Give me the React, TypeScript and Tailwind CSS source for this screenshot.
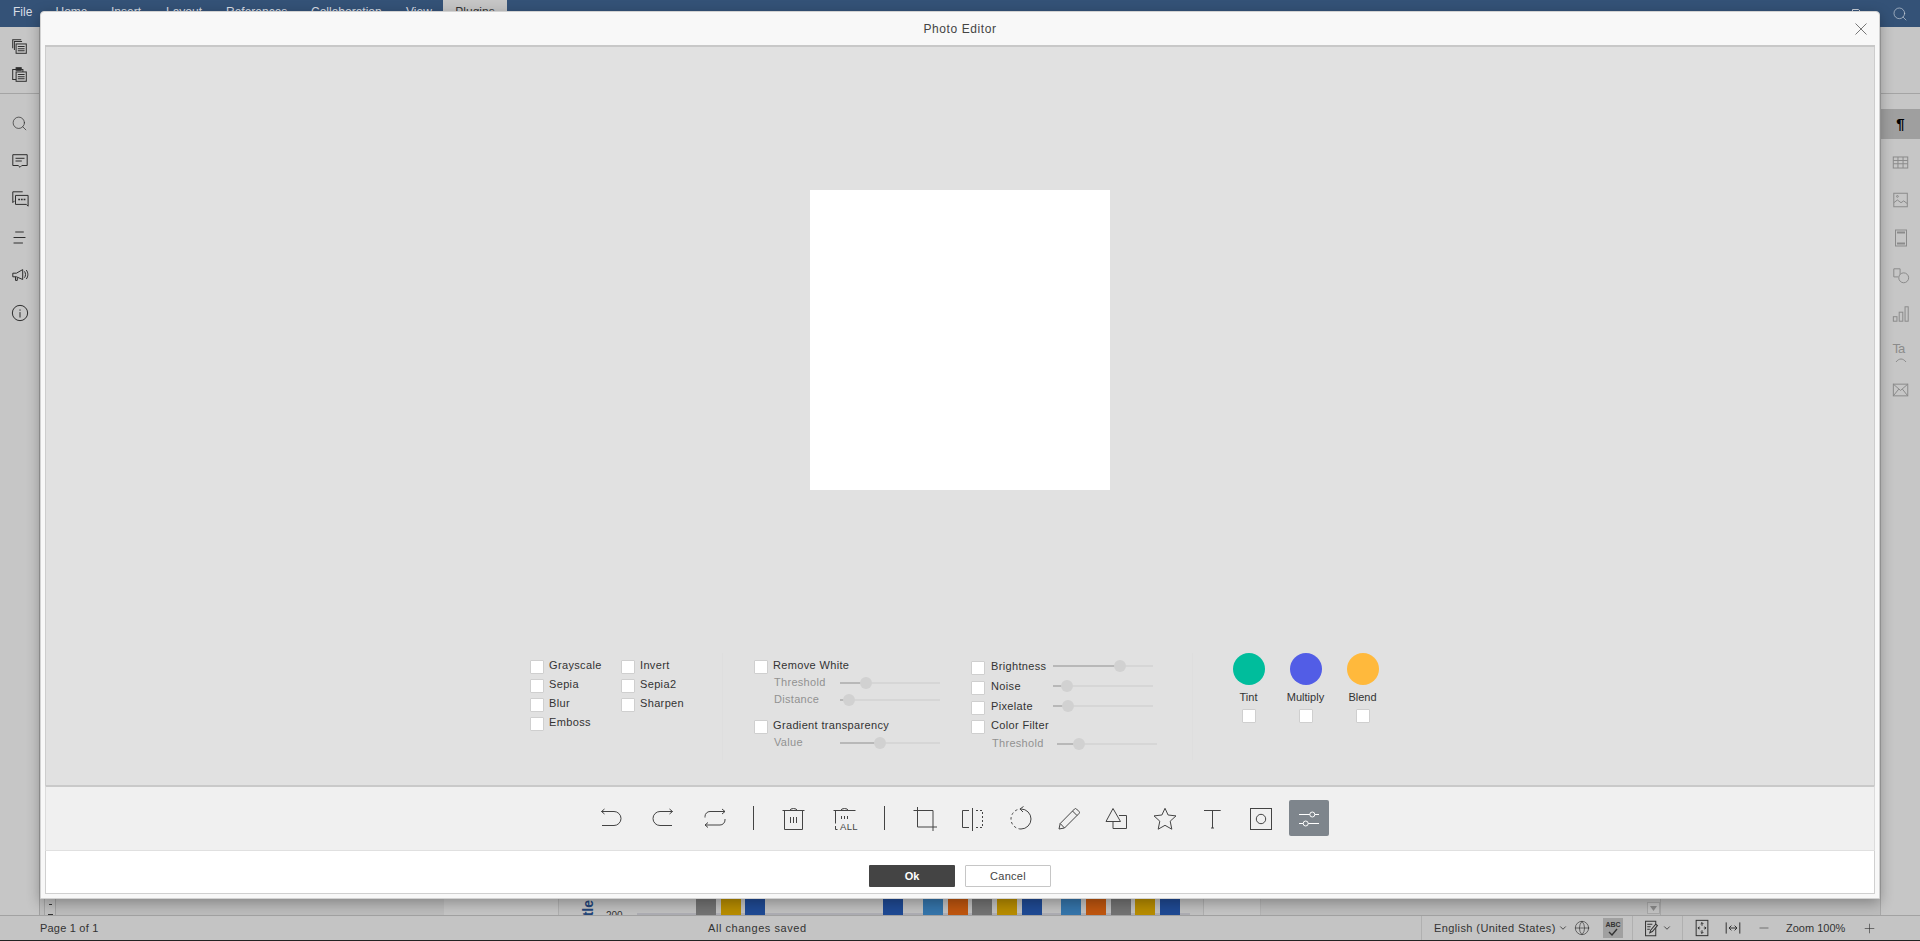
import React from 'react';
import { Search, Plus, Minus, ChevronDown, Globe } from 'lucide-react';

const menuItems = [
  { label: 'Home', w: 'w-[55.5px]' },
  { label: 'Insert', w: 'w-[55px]' },
  { label: 'Layout', w: 'w-[60px]' },
  { label: 'References', w: 'w-[85px]' },
  { label: 'Collaboration', w: 'w-[95px]' },
  { label: 'View', w: 'w-[37px]' },
];

const Ico = ({ children, size = 20, className = '' }: { children: React.ReactNode; size?: number; className?: string }) => (
  <svg width={size} height={size} viewBox="0 0 20 20" fill="none" stroke="currentColor" strokeWidth={20 / size} className={className}>
    {children}
  </svg>
);

const Check = ({ className = '' }: { className?: string }) => (
  <span className={`block w-[14px] h-[14px] bg-white border border-[#cfcfcf] rounded-[1px] shrink-0 ${className}`} />
);

const Slider = ({ pct }: { pct: number }) => (
  <span className="relative block w-[100px] h-[2px] bg-[#d6d6d6]">
    <span className="absolute left-0 top-0 h-[2px] bg-[#b8b8b8]" style={{ width: `${pct}%` }} />
    <span className="absolute top-[-5px] w-[12px] h-[12px] rounded-full bg-[#d1d1d1]" style={{ left: `calc(${pct}% - 6px)` }} />
  </span>
);

const Filter = ({ label }: { label: string }) => (
  <div className="flex items-start h-[19px] gap-[5px]">
    <Check className="mt-[2px]" />
    <span className="text-[11px] leading-[14px] tracking-[0.35px] text-[#333]">{label}</span>
  </div>
);

const Disabled = ({ label, pct, className = 'ml-[20px]' }: { label: string; pct: number; className?: string }) => (
  <div className={`flex items-center h-[17px] ${className}`}>
    <span className="w-[66px] text-[11px] tracking-[0.3px] text-[#919191]">{label}</span>
    <Slider pct={pct} />
  </div>
);

const SliderRow = ({ label, pct, h = 'h-[20px]' }: { label: string; pct: number; h?: string }) => (
  <div className={`flex items-start ${h}`}>
    <Check className="mt-[2px]" />
    <span className="w-[62px] ml-[6px] text-[11px] leading-[14px] tracking-[0.35px] text-[#333]">{label}</span>
    <span className="mt-[6px]"><Slider pct={pct} /></span>
  </div>
);

const Swatch = ({ label, color }: { label: string; color: string }) => (
  <div className="flex flex-col items-center w-[57px]">
    <span className={`block w-[32px] h-[32px] rounded-full ${color}`} />
    <span className="mt-[5px] h-[14px] text-[11px] text-[#333] leading-[14px]">{label}</span>
    <Check className="mt-[5px]" />
  </div>
);

const ToolBtn = ({ children, active }: { children: React.ReactNode; active?: boolean }) => (
  <div className={`w-[40px] h-[36px] shrink-0 flex items-center justify-center rounded-[2px] ${active ? 'bg-[#7e858c] text-white' : 'text-[#444]'}`}>
    {children}
  </div>
);

const ToolIcon = ({ children }: { children: React.ReactNode }) => (
  <svg width="26" height="26" viewBox="0 0 26 26" fill="none" stroke="currentColor" strokeWidth="1">
    {children}
  </svg>
);

const Sep = ({ className }: { className: string }) => <div className={`w-px h-[24px] bg-[#444] shrink-0 ${className}`} />;

const RailItem = ({ children }: { children: React.ReactNode }) => (
  <div className="h-[38px] flex items-center justify-center">{children}</div>
);

const chartBars = [
  { x: 696, c: 'bg-[#737373]' }, { x: 721, c: 'bg-[#b88d00]' }, { x: 745, c: 'bg-[#1f4a94]' },
  { x: 883, c: 'bg-[#1f4a94]' }, { x: 923, c: 'bg-[#3575ab]' }, { x: 948, c: 'bg-[#bf560f]' },
  { x: 972, c: 'bg-[#737373]' }, { x: 997, c: 'bg-[#b88d00]' }, { x: 1022, c: 'bg-[#1f4a94]' },
  { x: 1061, c: 'bg-[#3575ab]' }, { x: 1086, c: 'bg-[#bf560f]' }, { x: 1111, c: 'bg-[#737373]' },
  { x: 1135, c: 'bg-[#b88d00]' }, { x: 1160, c: 'bg-[#1f4a94]' },
];

export default function App() {
  return (
    <div className="relative w-[1920px] h-[941px] overflow-hidden bg-[#c4c4c4] flex flex-col font-['Liberation_Sans',Arial,sans-serif] text-[#333]">
      {/* app header behind the dialog */}
      <div className="h-[27px] bg-[#345277] flex items-center text-[12px] text-[#d9dee5] shrink-0">
        <span className="w-[42.5px] ml-[13px] relative top-[-2px]">File</span>
        {menuItems.map((m) => (
          <span key={m.label} className={`${m.w} relative top-[-2px]`}>{m.label}</span>
        ))}
        <span className="w-[64px] h-full bg-[#c6c6c6] text-[#333] flex items-center justify-center pb-[4px]">Plugins</span>
        <div className="ml-auto mr-[12px] flex items-center gap-[24px] text-[#c9d0da]">
          <svg width="16" height="14" viewBox="0 0 16 14" fill="none" stroke="currentColor"><path d="M.5 12V2.500h6l2 2h7V12z" /></svg>
          <Search size={16} strokeWidth={1} />
        </div>
      </div>

      <div className="flex-1 flex min-h-0">
        {/* left rail */}
        <div className="w-[40px] bg-[#c6c6c6] shrink-0 border-r border-[#a0a0a0] text-[#2e2e2e]">
          <div className="h-[67px] border-b border-[#a4a4a4] flex flex-col items-center pt-[11px] gap-[11px]">
            <Ico size={17}>
              <path d="M2 12V2h10M4 14V4h9" /><rect x="6" y="7" width="12" height="11" fill="#c6c6c6" /><path d="M8 10h8M8 12.500h8M8 15h8" />
            </Ico>
            <Ico size={17}>
              <path d="M6 4H2v12h4" /><rect x="6" y="2" width="6" height="3" fill="currentColor" /><path d="M12 4h2v3" /><rect x="6" y="7" width="12" height="11" /><path d="M8 10h8M8 12.500h8M8 15h8" />
            </Ico>
          </div>
          <div className="flex flex-col pt-[10px]">
            <RailItem><Search size={17} strokeWidth={1} /></RailItem>
            <RailItem>
              <Ico size={18}><path d="M2 3h16v12h-6l-2 2-2-2H2z" /><path d="M5 7h10M5 10h7" /></Ico>
            </RailItem>
            <RailItem>
              <Ico size={18}><path d="M13 2H2v12l2-2" /><path d="M5 6h14v12l-2-2H5z" /><path d="M8 10.500h2M11 10.500h2M14 10.500h2" strokeWidth="1.600" /></Ico>
            </RailItem>
            <RailItem>
              <Ico size={17}><path d="M5 3.500h10M3 10h14M3 16.500h11" /></Ico>
            </RailItem>
            <RailItem>
              <Ico size={18}><path d="M2 8h4l7-4v11L6 12H2zM5 12v4h2v-3" /><path d="M15 6c1.500 2 1.500 5 0 7M17 4.500c2.300 3 2.300 7 0 10" /></Ico>
            </RailItem>
            <RailItem>
              <Ico size={18}><circle cx="10" cy="10" r="8.500" /><path d="M10 9v6M10 6v1.500" /></Ico>
            </RailItem>
          </div>
        </div>

        {/* document area, mostly under the dialog */}
        <div className="relative flex-1 overflow-hidden bg-[#bdbdbd]">
          <div className="absolute left-[404px] w-[817px] top-0 bottom-0 bg-[#c6c6c6] border-r border-[#b4b4b4]" />
          <div className="absolute left-[518px] w-[646px] top-0 bottom-0 bg-[#c2c2c2] border-x border-[#b0b0b0]" />
          <div className="absolute left-[4px] w-[12px] bottom-0 h-[16px] bg-[#c0c0c0] border-x border-[#a4a4a4] flex flex-col items-center justify-between pt-[5px] text-[#333]">
            <span className="block w-[3px] h-px bg-[#333]" />
            <span className="block w-[5px] h-px bg-[#333]" />
          </div>
          <div className="absolute left-[1607px] w-[13px] bottom-[1px] h-[12px] bg-[#c4c4c4] border border-[#a8a8a8] flex items-center justify-center">
            <svg width="7" height="5" viewBox="0 0 7 5"><path d="M0 0h7L3.500 5z" fill="#8a8a8a" /></svg>
          </div>
          <div className="absolute left-[1620px] w-px bottom-0 h-[16px] bg-[#a8a8a8]" />
          <div className="absolute left-[597px] w-[553px] bottom-0 h-[2px] bg-[#aeaeb4]" />
          {chartBars.map((b) => (
            <div key={b.x} className={`absolute bottom-0 w-[20px] h-[16px] ${b.c}`} style={{ left: b.x - 40 }} />
          ))}
          <span className="absolute left-[566px] bottom-[-6px] text-[10px] leading-[10px] text-[#333]">200</span>
          <span className="absolute left-[541px] bottom-[-14px] text-[14px] leading-[14px] font-bold text-[#24467a] [writing-mode:vertical-rl] rotate-180">Title</span>
        </div>

        {/* right rail */}
        <div className="w-[40px] bg-[#c6c6c6] shrink-0 text-[#8b8b8b] border-l border-[#a8a8a8]">
          <div className="h-[67px] border-b border-[#a4a4a4]" />
          <div className="flex flex-col pt-[15px]">
            <div className="h-[30px] mb-[4px] bg-[#9f9f9f] text-black text-[15px] font-bold flex items-center justify-center">¶</div>
            <RailItem>
              <Ico size={17}><rect x="1.500" y="3.500" width="17" height="13" /><path d="M1.500 7.500h17M1.500 11.500h17M7 3.500v13M13 3.500v13" /></Ico>
            </RailItem>
            <RailItem>
              <Ico size={18}><rect x="2" y="2.500" width="15" height="15" /><path d="M2 13l4-3 4 3 3-2 4 3" /><circle cx="6" cy="6" r="1" /></Ico>
            </RailItem>
            <RailItem>
              <Ico size={20}><rect x="4.500" y="2" width="11" height="16" /><path d="M6 4.500h8M6 15.500h8" strokeWidth="2" /></Ico>
            </RailItem>
            <RailItem>
              <Ico size={18}><path d="M9 9V2H2v9h5" /><circle cx="13" cy="12" r="5.500" fill="#c6c6c6" /></Ico>
            </RailItem>
            <RailItem>
              <Ico size={18}><rect x="1.500" y="13" width="4" height="5" /><rect x="8" y="8" width="4" height="10" /><rect x="14.500" y="2" width="3.500" height="16" /></Ico>
            </RailItem>
            <RailItem>
              <span className="relative block w-[16px] h-[22px] text-[13px] leading-[16px] tracking-[-1px]">
                Ta
                <svg className="absolute left-[2px] bottom-0" width="12" height="5" viewBox="0 0 12 5" fill="none" stroke="currentColor"><path d="M1 4c3-4 7-4 10 0" /></svg>
              </span>
            </RailItem>
            <RailItem>
              <Ico size={18}><rect x="1.500" y="3.500" width="16" height="13" /><path d="M1.500 3.500l8 7 8-7M1.500 16.500l6-7.500M17.500 16.500l-6-7.500" /></Ico>
            </RailItem>
          </div>
        </div>
      </div>

      {/* status bar */}
      <div className="h-[26px] shrink-0 bg-[#c4c4c4] border-t border-[#a2a2a2] border-b border-b-[#222] flex items-center text-[11px] text-[#333]">
        <span className="w-[668px] ml-[40px] tracking-[0.2px]">Page 1 of 1</span>
        <span className="tracking-[0.55px]">All changes saved</span>
        <div className="ml-auto w-[499px] h-full flex items-center">
          <div className="w-[211px] h-full flex items-center pl-[12px] border-l border-[#b0b0b0]">
            <span className="w-[120px] tracking-[0.4px] whitespace-nowrap">English (United States)</span>
            <ChevronDown size={10} className="ml-[4px]" />
            <Globe size={16} strokeWidth={1} className="ml-[6px]" />
            <span className="ml-[13px] w-[20px] h-[20px] bg-[#a0a0a0] flex flex-col items-center justify-center text-[7px] font-bold leading-[7px]">
              ABC
              <svg width="10" height="8" viewBox="0 0 10 8" fill="none" stroke="currentColor" strokeWidth="1.400"><path d="M1 4l3 3 5-6" /></svg>
            </span>
          </div>
          <div className="w-[50px] h-full flex items-center pl-[10px] border-l border-[#b0b0b0]">
            <Ico size={17}><path d="M3 1.500h12v17H3zM5 5h6M5 8h4M5 11h3" /><path d="M8 15l1-3 6-7 2 1.500-6 7z" fill="#c4c4c4" /></Ico>
            <ChevronDown size={10} className="ml-[2px]" />
          </div>
          <div className="h-full flex items-center pl-[10px] border-l border-[#b0b0b0]">
            <Ico size={18}><rect x="3.500" y="1.500" width="13" height="17" /><path d="M10 4v3.500M8.500 5.500L10 4l1.500 1.500M10 16v-3.500M8.500 14.500L10 16l1.500-1.500M5.500 10h2.500M7 8.500L5.500 10 7 11.500M14.500 10H12M13 8.500l1.500 1.500-1.500 1.500" /></Ico>
            <Ico size={16} className="ml-[14px]"><path d="M1.500 3v14M18.500 3v14M5 10h10M5 10l3-3M5 10l3 3M15 10l-3-3M15 10l-3 3" /></Ico>
            <Minus size={14} strokeWidth={1} className="ml-[16px]" />
            <span className="ml-[15px] w-[61px] whitespace-nowrap">Zoom 100%</span>
            <Plus size={15} strokeWidth={1} className="ml-[15px]" />
          </div>
        </div>
      </div>

      {/* Photo Editor dialog */}
      <div className="absolute left-[40px] top-[11px] w-[1840px] h-[888px] bg-[#f8f8f8] rounded-t-[4px] border border-[#d2d2d2] shadow-[0_4px_14px_rgba(0,0,0,0.3)] flex flex-col">
        <div className="relative h-[33px] shrink-0 flex items-center justify-center pt-[1px] text-[12px] tracking-[0.6px] text-[#444]">
          Photo Editor
          <svg className="absolute right-[12px] top-[11px] text-[#777]" width="12" height="12" viewBox="0 0 12 12" fill="none" stroke="currentColor"><path d="M.5.500l11 11M11.500.500l-11 11" /></svg>
        </div>
        <div className="flex-1 min-h-0 mx-[4px] mb-[4px] flex flex-col border-t-2 border-[#c8c8c8]">
          {/* canvas + filter panel */}
          <div className="relative flex-1 bg-[#e1e1e1] border-x border-[#cdcdcd] flex flex-col items-center">
            <div className="w-[300px] h-[300px] bg-white mt-[143px]" />
            <div className="mt-[163px] w-[860px] flex items-start">
              <div className="w-[192px] shrink-0 grid grid-cols-[91px_80px] mt-[5px]">
                <Filter label="Grayscale" />
                <Filter label="Invert" />
                <Filter label="Sepia" />
                <Filter label="Sepia2" />
                <Filter label="Blur" />
                <Filter label="Sharpen" />
                <Filter label="Emboss" />
              </div>
              <div className="w-[249px] h-[107px] shrink-0 pl-[31px] pt-[5px] border-l border-[#dedede]">
                <div className="h-[16px]"><Filter label="Remove White" /></div>
                <Disabled label="Threshold" pct={26} />
                <Disabled label="Distance" pct={9} />
                <div className="h-[16px] mt-[10px]"><Filter label="Gradient transparency" /></div>
                <Disabled label="Value" pct={40} />
              </div>
              <div className="w-[222px] h-[107px] shrink-0 pt-[6px] border-r border-[#dedede]">
                <SliderRow label="Brightness" pct={67} />
                <SliderRow label="Noise" pct={14} />
                <SliderRow label="Pixelate" pct={15} h="h-[19px]" />
                <div className="h-[17px]">
                  <div className="flex items-start">
                    <Check className="mt-[2px]" />
                    <span className="ml-[6px] text-[11px] leading-[14px] tracking-[0.35px] text-[#333]">Color Filter</span>
                  </div>
                </div>
                <Disabled label="Threshold" pct={22} className="ml-[21px] [&>span:first-child]:w-[65px]" />
              </div>
              <div className="flex ml-[27px] shrink-0">
                <Swatch label="Tint" color="bg-[#00bd9c]" />
                <Swatch label="Multiply" color="bg-[#525de6]" />
                <Swatch label="Blend" color="bg-[#ffb93c]" />
              </div>
            </div>
          </div>
          {/* tool strip */}
          <div className="h-[66px] shrink-0 bg-[#f0f0f0] border-t-2 border-t-[#c9c9c9] border-b border-b-[#e0e0e0] border-x border-x-[#dcdcdc] flex items-center justify-center pb-[2px]">
            <div className="flex gap-[12px]">
              <ToolBtn><ToolIcon><path d="M3.500 6.500H16a7 7 0 0 1 0 14H4M3.500 6.500l3-2.500M3.500 6.500l3 2.500" /></ToolIcon></ToolBtn>
              <ToolBtn><ToolIcon><path d="M22.500 6.500H10a7 7 0 0 0 0 14h12M22.500 6.500l-3-2.500M22.500 6.500l-3 2.500" /></ToolIcon></ToolBtn>
              <ToolBtn><ToolIcon><path d="M23 6.500H8a5 5 0 0 0-5 5v1M23 6.500l-3-2.500M23 6.500l-3 2.500M3 20h15a5 5 0 0 0 5-5v-1M3 20l3-2.500M3 20l3 2.500" /></ToolIcon></ToolBtn>
            </div>
            <Sep className="ml-[18px] mr-[19px]" />
            <div className="flex gap-[12px]">
              <ToolBtn><ToolIcon><path d="M2.500 5.500h22M10 5.500q0-2 3.500-2t3.500 2M4.500 5.500v19h18v-19M10.500 12v6M13.500 12v6M16.500 12v6" /></ToolIcon></ToolBtn>
              <ToolBtn>
                <span className="relative block w-[26px] h-[26px]">
                  <ToolIcon><path d="M1.500 5.500h22M9 5.500q0-2 3.500-2t3.500 2M3.500 5.500v13M3.500 21v3.500h2M9.500 11v3M12.500 11v3M15.500 11v3" /></ToolIcon>
                  <span className="absolute left-[8px] top-[17px] text-[9.500px] leading-[9px] tracking-[0.3px]">ALL</span>
                </span>
              </ToolBtn>
            </div>
            <Sep className="ml-[19px] mr-[20px]" />
            <div className="flex gap-[8px]">
              <ToolBtn><ToolIcon><path d="M5.500 2v20h19.500M1.500 5.500h19.500v20.500" /></ToolIcon></ToolBtn>
              <ToolBtn><ToolIcon><path d="M9 5.500H2.500v17H9M12.500 3v23" /><path d="M16 5.500h6.500v17H16" strokeDasharray="2 2" /></ToolIcon></ToolBtn>
              <ToolBtn><ToolIcon><path d="M13 4a10 10 0 0 1 0 20" /><path d="M13 24A10 10 0 0 1 13 4" strokeDasharray="2.500 2.500" /><path d="M15.500 1.500L12 4l3 3" /></ToolIcon></ToolBtn>
              <ToolBtn><ToolIcon><path d="M3 24l1.200-5.500L18.500 4q1-1 2 0l2.500 2.500q1 1 0 2L8.500 23zM4.200 18.500L8.500 23M16.500 6l4.500 4.500" /></ToolIcon></ToolBtn>
              <ToolBtn><ToolIcon><path d="M9 3.500l7.500 13H2zM15 10.500h7.500v13H9V17" /></ToolIcon></ToolBtn>
              <ToolBtn><ToolIcon><path d="M13 3.300l3.100 6.700 7.900.9-5.800 5.300 1.600 8-6.800-3.900-6.800 3.900 1.600-8-5.800-5.300 7.900-.9z" /></ToolIcon></ToolBtn>
              <ToolBtn><ToolIcon><path d="M4 5.500h16.700M12.500 5.500v17.500M11 23h3" /></ToolIcon></ToolBtn>
              <ToolBtn><ToolIcon><rect x="2.500" y="3.500" width="21" height="21" /><circle cx="13" cy="14" r="4.700" /></ToolIcon></ToolBtn>
              <ToolBtn active><ToolIcon><path d="M3 9.500h10.800M18.800 9.500H23M3 18.500h4.200M12.200 18.500H23" /><circle cx="16.300" cy="9.500" r="2.500" /><circle cx="9.700" cy="18.500" r="2.500" /></ToolIcon></ToolBtn>
            </div>
          </div>
          {/* footer */}
          <div className="h-[43px] shrink-0 bg-white border-b border-x border-[#d0d0d0] flex items-center justify-center gap-[10px] pt-[8px] text-[11px]">
            <button className="w-[86px] h-[22px] bg-[#444] text-white font-bold rounded-[1px]">Ok</button>
            <button className="w-[86px] h-[22px] bg-white border border-[#c6c6c6] text-[#444] tracking-[0.3px] rounded-[1px]">Cancel</button>
          </div>
        </div>
      </div>
    </div>
  );
}
